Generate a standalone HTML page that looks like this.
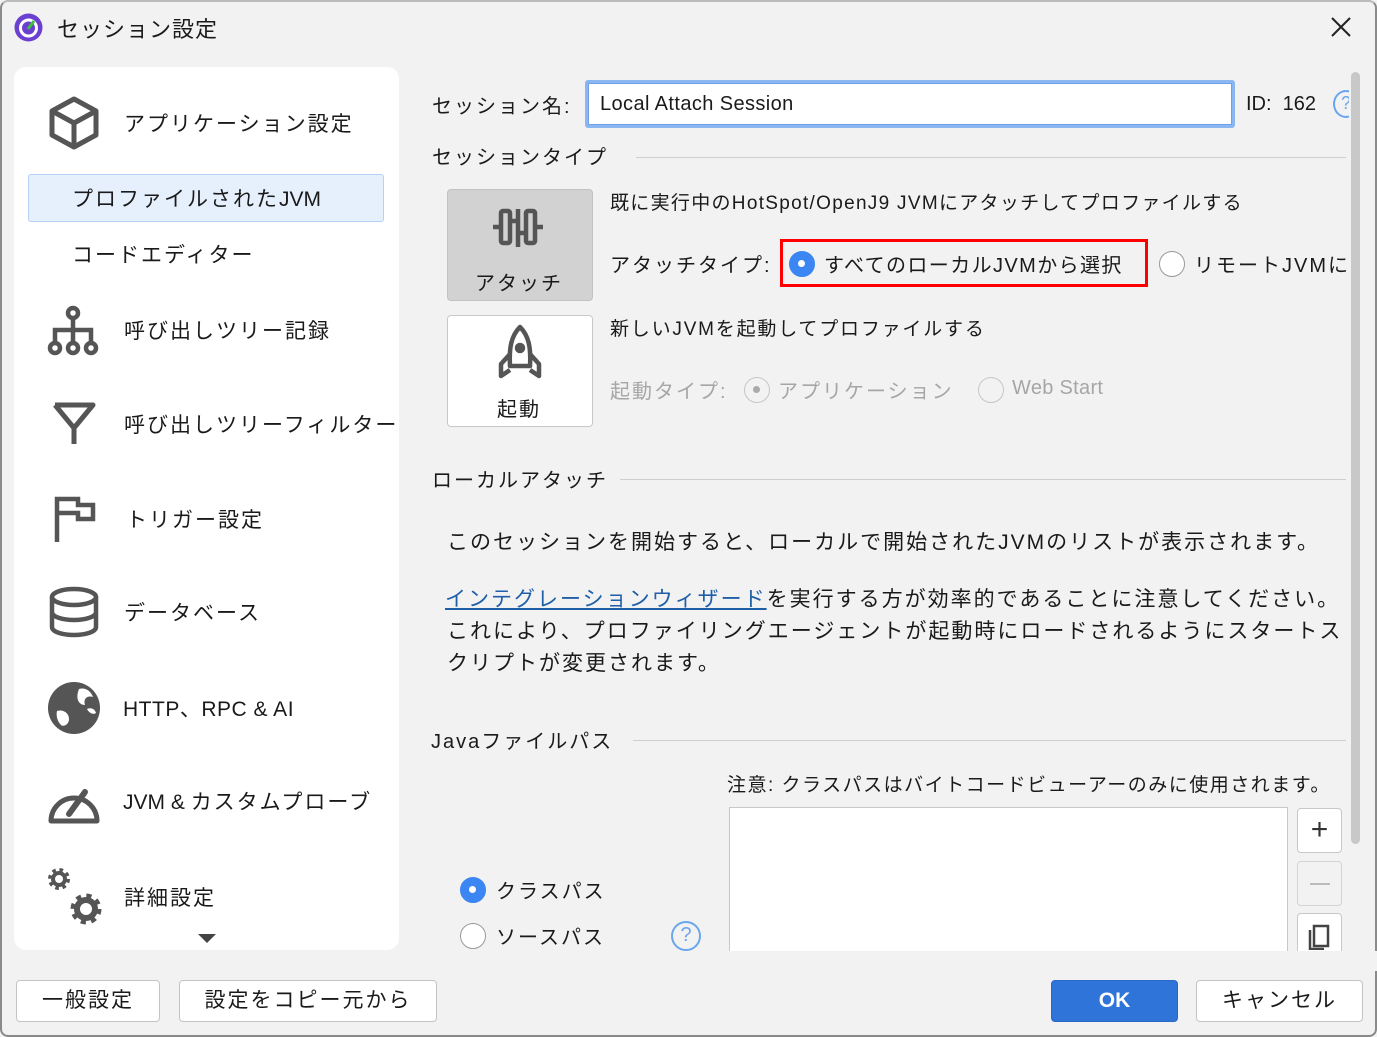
<!DOCTYPE html>
<html><head><meta charset="utf-8"><style>
*{margin:0;padding:0;box-sizing:border-box}
body{width:1377px;height:1037px;background:#f2f2f2;font-family:"Liberation Sans","Noto Sans CJK JP",sans-serif;color:#1a1a1a;position:relative;overflow:hidden;letter-spacing:2px}
.a{position:absolute;white-space:nowrap}
.win{position:absolute;left:0;top:0;width:1377px;height:1037px;border:2px solid #8a8a8a;border-radius:8px;border-top-color:#bbb}
.side{position:absolute;left:14px;top:67px;width:385px;height:883px;background:#fff;border-radius:12px}
.st{font-size:21px;color:#1a1a1a}
.ct{font-size:20px}
.btn{position:absolute;background:#fff;border:1px solid #c4c4c4;border-radius:4px;font-size:21px;text-align:center}
.rad{position:absolute;width:26px;height:26px;border-radius:50%;border:1.5px solid #9a9a9a;background:#fff}
.rad.on{background:#3b86f2;border-color:#3b86f2}
.rad.on::after{content:"";position:absolute;left:8px;top:8px;width:7px;height:7px;border-radius:50%;background:#fff}
.hr{position:absolute;height:1px;background:#cfcfcf}
.l{letter-spacing:0}
</style></head><body>
<div class="win"></div>
<svg class="a" style="left:14px;top:13px" width="29" height="29" viewBox="0 0 29 29"><circle cx="14.5" cy="14.5" r="14" fill="#6b3fd0"/><circle cx="14.5" cy="15" r="8" fill="none" stroke="#fff" stroke-width="3"/><path d="M14 16 L20 8" stroke="#3fbf3f" stroke-width="3"/></svg>
<div class="a" style="left:57px;top:12px;font-size:22px;letter-spacing:1px">セッション設定</div>
<svg class="a" style="left:1330px;top:16px" width="22" height="22"><path d="M2 2L20 20M20 2L2 20" stroke="#222" stroke-width="2"/></svg>

<div class="side"></div>
<svg class="a" style="left:48px;top:96px" width="52" height="54" viewBox="0 0 52 54" fill="none" stroke="#555" stroke-width="5" stroke-linejoin="round"><path d="M26 3L48 15V39L26 51L4 39V15Z M4 15L26 27L48 15 M26 27V51"/></svg>
<div class="a st" style="left:124px;top:108px">アプリケーション設定</div>
<div class="a" style="left:28px;top:174px;width:356px;height:48px;background:#e6f0fc;border:1px solid #b5d2f6;border-radius:3px"></div>
<div class="a st" style="left:72px;top:183px">プロファイルされた<span class="l">JVM</span></div>
<div class="a st" style="left:72px;top:239px">コードエディター</div>
<svg class="a" style="left:46px;top:303px" width="54" height="54" viewBox="0 0 54 54" fill="none" stroke="#555" stroke-width="4.5"><circle cx="27" cy="10" r="5"/><path d="M27 15V27M9 40V27H45V40M27 27V40"/><circle cx="9" cy="45" r="5"/><circle cx="27" cy="45" r="5"/><circle cx="45" cy="45" r="5"/></svg>
<div class="a st" style="left:124px;top:315px">呼び出しツリー記録</div>
<svg class="a" style="left:52px;top:402px" width="44" height="44" viewBox="0 0 44 44" fill="none" stroke="#555" stroke-width="5" stroke-linejoin="round"><path d="M3 3H41L22 26V42"/><path d="M3 3L22 26"/></svg>
<div class="a st" style="left:124px;top:409px">呼び出しツリーフィルター</div>
<svg class="a" style="left:54px;top:496px" width="42" height="46" viewBox="0 0 42 46" fill="none" stroke="#555" stroke-width="4.5"><path d="M3 46V3H24V9H39V23H24V17H3"/></svg>
<div class="a st" style="left:126px;top:504px">トリガー設定</div>
<svg class="a" style="left:49px;top:586px" width="50" height="52" viewBox="0 0 50 52" fill="none" stroke="#555" stroke-width="4.5"><ellipse cx="25" cy="11" rx="22" ry="8"/><path d="M3 11V41C3 46 14 49 25 49S47 46 47 41V11M3 26C3 31 14 34 25 34S47 31 47 26"/></svg>
<div class="a st" style="left:124px;top:597px">データベース</div>
<svg class="a" style="left:47px;top:681px" width="54" height="54" viewBox="0 0 54 54"><circle cx="27" cy="27" r="26" fill="#555"/><path d="M10 30C16 28 22 32 22 38C22 44 16 46 14 44C10 40 9 34 10 30Z M32 8C38 6 44 10 46 16C40 14 36 18 38 24C32 24 28 18 32 8Z M40 28C44 26 48 28 49 32C46 34 42 32 40 28Z" fill="#fff"/></svg>
<div class="a st l" style="left:123px;top:693px;letter-spacing:0.5px">HTTP、RPC &amp; AI</div>
<svg class="a" style="left:47px;top:778px" width="54" height="46" viewBox="0 0 54 46" fill="none" stroke="#555" stroke-width="5"><path d="M4 43A23 23 0 1 1 50 43Z" stroke-linejoin="round"/><path d="M22 36L38 14" stroke-width="6" stroke-linecap="round"/></svg>
<div class="a st" style="left:123px;top:786px"><span class="l">JVM &amp; </span>カスタムプローブ</div>
<svg class="a" style="left:46px;top:866px" width="58" height="62" viewBox="0 0 58 62"><g fill="none" stroke="#555"><circle cx="13" cy="13" r="6" stroke-width="4"/><circle cx="13" cy="13" r="9" stroke-width="4" stroke-dasharray="3.5 3.6"/><circle cx="40" cy="43" r="9" stroke-width="6"/><circle cx="40" cy="43" r="13" stroke-width="5" stroke-dasharray="5 5.2"/></g></svg>
<div class="a st" style="left:124px;top:882px">詳細設定</div>
<svg class="a" style="left:198px;top:934px" width="18" height="10"><path d="M0 0H18L9 9Z" fill="#444"/></svg>

<div class="a ct" style="left:432px;top:90px">セッション名:</div>
<div class="a" style="left:585px;top:80px;width:650px;height:48px;border:3px solid #8ab6f2;border-radius:3px;background:#fff"><div style="border:1px solid #6fa0e8;position:absolute;inset:0"></div></div>
<div class="a ct l" style="left:600px;top:93px;letter-spacing:0.4px">Local Attach Session</div>
<div class="a ct l" style="left:1246px;top:93px">ID:&nbsp; 162</div>
<div class="a" style="left:1333px;top:90px;width:26px;height:28px;border:2.5px solid #6aa6ee;border-radius:50%;color:#6aa6ee;font-size:18px;line-height:22px;padding-left:6px">?</div>
<div class="a" style="left:1349px;top:70px;width:14px;height:780px;background:#f2f2f2"></div>
<div class="a" style="left:1351px;top:72px;width:9px;height:772px;background:#c8c8c8;border-radius:5px"></div>

<div class="a ct" style="left:432px;top:141px">セッションタイプ</div>
<div class="hr" style="left:636px;top:157px;width:710px"></div>

<div class="a" style="left:447px;top:189px;width:146px;height:112px;background:#d2d2d2;border:1px solid #c2c2c2;border-radius:4px"></div>
<svg class="a" style="left:490px;top:205px" width="60" height="44" viewBox="0 0 60 44" fill="none" stroke="#555" stroke-width="4.5" stroke-linejoin="round"><rect x="11" y="6" width="9" height="32" rx="2"/><rect x="36" y="6" width="9" height="32" rx="2"/><path d="M28 4V42M3 22H11M45 22H53M20 16H28M28 28H36"/></svg>
<div class="a ct" style="left:475px;top:267px">アタッチ</div>
<div class="a" style="left:447px;top:315px;width:146px;height:112px;background:#fff;border:1px solid #c8c8c8;border-radius:4px"></div>
<svg class="a" style="left:497px;top:324px" width="46" height="56" viewBox="0 0 46 56" fill="none" stroke="#555" stroke-width="4.5" stroke-linejoin="round"><path d="M23 3C14 12 12 24 13 42H33C34 24 32 12 23 3Z"/><path d="M13 30L4 40V52L13 46M33 30L42 40V52L33 46"/><circle cx="23" cy="24" r="3" fill="#555"/></svg>
<div class="a ct" style="left:497px;top:393px">起動</div>

<div class="a" style="left:610px;top:188px;font-size:19px;letter-spacing:1.3px">既に実行中のHotSpot/OpenJ9 JVMにアタッチしてプロファイルする</div>
<div class="a ct" style="left:610px;top:249px">アタッチタイプ:</div>
<div class="a" style="left:780px;top:239px;width:368px;height:48px;border:3px solid #f00"></div>
<div class="rad on" style="left:789px;top:251px"></div>
<div class="a ct" style="left:824px;top:249px;letter-spacing:1.4px">すべてのローカルJVMから選択</div>
<div class="rad" style="left:1159px;top:251px"></div>
<div class="a ct" style="left:1194px;top:249px">リモートJVMに</div>
<div class="a" style="left:610px;top:314px;font-size:19px;letter-spacing:1.8px">新しいJVMを起動してプロファイルする</div>
<div class="a ct" style="left:610px;top:375px;color:#a6a6a6">起動タイプ:</div>
<div class="rad" style="left:744px;top:377px;border-color:#c6c6c6;background:#f2f2f2"><div style="position:absolute;left:8px;top:8px;width:7px;height:7px;border-radius:50%;background:#aaa"></div></div>
<div class="a ct" style="left:778px;top:375px;color:#a6a6a6">アプリケーション</div>
<div class="rad" style="left:978px;top:377px;border-color:#c6c6c6;background:#f2f2f2"></div>
<div class="a ct l" style="left:1012px;top:377px;color:#a6a6a6;letter-spacing:0.3px">Web Start</div>

<div class="a ct" style="left:432px;top:464px">ローカルアタッチ</div>
<div class="hr" style="left:620px;top:479px;width:726px"></div>
<div class="a" style="left:447px;top:526px;font-size:21px">このセッションを開始すると、ローカルで開始されたJVMのリストが表示されます。</div>
<div class="a" style="left:445px;top:583px;font-size:21px"><span style="color:#1f5fa8;text-decoration:underline">インテグレーションウィザード</span>を実行する方が効率的であることに注意してください。</div>
<div class="a" style="left:447px;top:615px;font-size:21px">これにより、プロファイリングエージェントが起動時にロードされるようにスタートス</div>
<div class="a" style="left:447px;top:647px;font-size:21px">クリプトが変更されます。</div>

<div class="a ct" style="left:431px;top:725px">Javaファイルパス</div>
<div class="hr" style="left:633px;top:740px;width:713px"></div>
<div class="a" style="left:727px;top:770px;font-size:19px;letter-spacing:1.5px">注意: クラスパスはバイトコードビューアーのみに使用されます。</div>
<div class="a" style="left:729px;top:807px;width:559px;height:150px;background:#fff;border:1px solid #c8c8c8"></div>
<div class="a" style="left:1297px;top:808px;width:45px;height:45px;background:#fff;border:1px solid #c8c8c8;border-radius:4px;font-size:30px;text-align:center;line-height:42px;color:#333;letter-spacing:0">+</div>
<div class="a" style="left:1297px;top:861px;width:45px;height:45px;background:#f2f2f2;border:1px solid #d4d4d4;border-radius:4px"><div style="position:absolute;left:12px;top:21px;width:20px;height:2px;background:#bbb"></div></div>
<div class="a" style="left:1297px;top:913px;width:45px;height:45px;background:#fff;border:1px solid #c8c8c8;border-radius:4px"><svg style="position:absolute;left:10px;top:8px" width="24" height="28"><path d="M6 4H20V24H6Z M2 8V27H16" fill="none" stroke="#444" stroke-width="2.5"/></svg></div>
<div class="a" style="left:400px;top:951px;width:977px;height:20px;background:#f2f2f2"></div>
<div class="rad on" style="left:460px;top:877px"></div>
<div class="a ct" style="left:496px;top:875px">クラスパス</div>
<div class="rad" style="left:460px;top:923px"></div>
<div class="a ct" style="left:496px;top:921px">ソースパス</div>
<div class="a" style="left:671px;top:921px;width:30px;height:30px;border:2.5px solid #6aa6ee;border-radius:50%;color:#6aa6ee;font-size:20px;text-align:center;line-height:25px;letter-spacing:0">?</div>

<div class="btn" style="left:16px;top:980px;width:144px;height:42px;line-height:40px">一般設定</div>
<div class="btn" style="left:179px;top:980px;width:258px;height:42px;line-height:40px">設定をコピー元から</div>
<div class="btn" style="left:1051px;top:980px;width:127px;height:42px;line-height:40px;background:#2f74d9;border-color:#2a68c4;color:#fff;font-weight:bold;letter-spacing:0">OK</div>
<div class="btn" style="left:1196px;top:980px;width:167px;height:42px;line-height:40px">キャンセル</div>
</body></html>
